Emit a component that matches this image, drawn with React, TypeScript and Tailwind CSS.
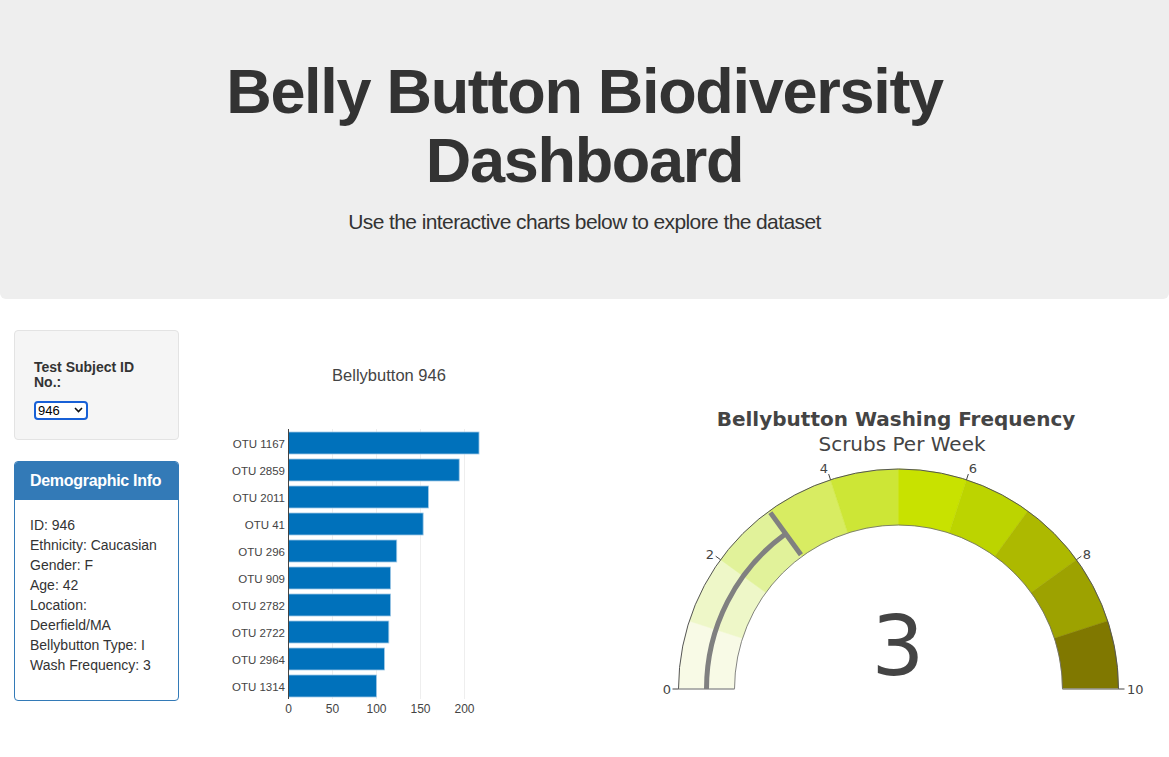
import React from "react";

const bars: [string, number][] = [
  ["OTU 1167", 216.5],
  ["OTU 2859", 194],
  ["OTU 2011", 159],
  ["OTU 41", 153],
  ["OTU 296", 123],
  ["OTU 909", 116],
  ["OTU 2782", 116],
  ["OTU 2722", 114],
  ["OTU 2964", 109],
  ["OTU 1314", 100],
];

const segColors = [
  "#f8fae6",
  "#eef7c8",
  "#e1f29a",
  "#d8ec62",
  "#cde636",
  "#c8e200",
  "#bcd400",
  "#adb900",
  "#9da200",
  "#807800",
];

const CX = 898.5;
const CY = 689;
const RO = 220;
const RI = 164;

function pt(v: number, r: number) {
  const t = Math.PI - (v * Math.PI) / 10;
  return [CX + r * Math.cos(t), CY - r * Math.sin(t)];
}

function segPath(a: number, b: number) {
  const [x1, y1] = pt(a, RO);
  const [x2, y2] = pt(b, RO);
  const [x3, y3] = pt(b, RI);
  const [x4, y4] = pt(a, RI);
  return `M${x1} ${y1} A${RO} ${RO} 0 0 1 ${x2} ${y2} L${x3} ${y3} A${RI} ${RI} 0 0 0 ${x4} ${y4} Z`;
}

function arcPath(a: number, b: number, r: number) {
  const [x1, y1] = pt(a, r);
  const [x2, y2] = pt(b, r);
  return `M${x1} ${y1} A${r} ${r} 0 0 1 ${x2} ${y2}`;
}

function BarChart() {
  const x0 = 288.5;
  const k = 0.88;
  return (
    <svg width={450} height={420} className="block">
      <g transform="translate(-195,-330)" fontFamily="'Liberation Sans', Arial, sans-serif">
        <text x={389} y={381} fontSize={16.5} fill="#444" textAnchor="middle">
          Bellybutton 946
        </text>
        {[50, 100, 150, 200].map((v) => (
          <line key={v} x1={x0 + v * k} x2={x0 + v * k} y1={429} y2={699} stroke="#eeeeee" strokeWidth={1} />
        ))}
        {bars.map(([name, v], i) => {
          const y = 432 + i * 27;
          return (
            <g key={name}>
              <rect x={x0} y={y} width={v * k} height={22} fill="#0071bb" stroke="#9fc8e6" strokeWidth={0.8} />
              <text x={285} y={y + 15.5} fontSize={11.5} fill="#444" textAnchor="end">
                {name}
              </text>
            </g>
          );
        })}
        <line x1={x0} x2={x0} y1={429} y2={699} stroke="#444" strokeWidth={1} />
        {[0, 50, 100, 150, 200].map((v) => (
          <text key={v} x={x0 + v * k} y={713} fontSize={12} fill="#444" textAnchor="middle">
            {v}
          </text>
        ))}
      </g>
    </svg>
  );
}

function Gauge() {
  const ticks: { v: number; x: number; y: number; anchor: "start" | "middle" | "end" }[] = [
    { v: 0, x: 671, y: 694, anchor: "end" },
    { v: 2, x: 710, y: 559, anchor: "middle" },
    { v: 4, x: 824, y: 473, anchor: "middle" },
    { v: 6, x: 973, y: 473, anchor: "middle" },
    { v: 8, x: 1087, y: 559, anchor: "middle" },
    { v: 10, x: 1127, y: 694, anchor: "start" },
  ];
  const [tx1, ty1] = pt(3, 166);
  const [tx2, ty2] = pt(3, 218);
  return (
    <svg width={524} height={420} className="block">
      <g transform="translate(-645,-330)" fontFamily="'DejaVu Sans', Verdana, sans-serif">
        <text x={896} y={426} fontSize={20} fontWeight="bold" fill="#444" textAnchor="middle">
          Bellybutton Washing Frequency
        </text>
        <text x={902} y={451} fontSize={20} fill="#444" textAnchor="middle">
          Scrubs Per Week
        </text>
        {segColors.map((c, i) => (
          <path key={i} d={segPath(i, i + 1)} fill={c} stroke={c} strokeWidth={0.5} />
        ))}
        <path d={arcPath(0, 10, RO)} fill="none" stroke="#555" strokeWidth={1} />
        <path d={arcPath(0, 10, RI)} fill="none" stroke="#666" strokeWidth={0.8} />
        <line x1={CX - RO} x2={CX - RI} y1={CY} y2={CY} stroke="#999" strokeWidth={1.5} />
        <line x1={CX + RI} x2={CX + RO} y1={CY} y2={CY} stroke="#999" strokeWidth={1.5} />
        <path d={arcPath(0, 3, 192)} fill="none" stroke="#808080" strokeWidth={5} />
        <line x1={tx1} y1={ty1} x2={tx2} y2={ty2} stroke="#808080" strokeWidth={5} />
        {ticks.map((t) => {
          const [a, b] = pt(t.v, RO);
          const [c, d] = pt(t.v, RO + 6);
          return (
            <g key={t.v}>
              <line x1={a} y1={b} x2={c} y2={d} stroke="#444" strokeWidth={1} />
              <text x={t.x} y={t.y} fontSize={13} fill="#444" textAnchor={t.anchor}>
                {t.v}
              </text>
            </g>
          );
        })}
        <text x={898} y={675} fontSize={83} fill="#444" textAnchor="middle">
          3
        </text>
      </g>
    </svg>
  );
}

export default function App() {
  return (
    <div className="w-[1169px] min-h-[757px] bg-white text-[#333]" style={{ fontFamily: "'Liberation Sans', Arial, sans-serif" }}>
      <div className="h-[299px] bg-[#eeeeee] rounded-b-[6px] pt-[57px] text-center">
        <h1 className="text-[63px] leading-[1.1] text-[#333] font-bold tracking-[-1.3px]">
          Belly Button Biodiversity
          <br />
          Dashboard
        </h1>
        <p className="mt-[11px] text-[21px] leading-[30px] text-[#333] font-light tracking-[-0.6px]">
          Use the interactive charts below to explore the dataset
        </p>
      </div>
      <div className="flex items-start mt-[31px]">
        <div className="w-[195px] shrink-0 pl-[14px]">
          <div className="w-[165px] bg-[#f5f5f5] border border-[#e3e3e3] rounded-[4px] px-[19px] pt-[29px] pb-[19px]">
            <h5 className="text-[14px] font-bold leading-[1.1] text-[#333]">
              Test Subject ID
              <br />
              No.:
            </h5>
            <div className="mt-[10px] w-[54px] h-[19px] border-2 border-[#1860d6] rounded-[4px] bg-white flex items-center justify-between pl-[2px] pr-[3px]">
              <span className="text-[13px] leading-none text-black">946</span>
              <svg width="9" height="6" viewBox="0 0 9 6">
                <path d="M1 1 L4.5 4.5 L8 1" fill="none" stroke="#111" strokeWidth="1.6" />
              </svg>
            </div>
          </div>
          <div className="w-[165px] mt-[21px] border border-[#337ab7] rounded-[4px] overflow-hidden">
            <div className="bg-[#337ab7] text-white text-[16px] font-bold tracking-[-0.3px] leading-[1.1] px-[15px] pt-[10px] pb-[10px] h-[38px]">
              Demographic Info
            </div>
            <div className="px-[15px] pt-[15px] pb-[25px] text-[14px] leading-[20px] text-[#333]">
              <div>ID: 946</div>
              <div>Ethnicity: Caucasian</div>
              <div>Gender: F</div>
              <div>Age: 42</div>
              <div>Location:</div>
              <div>Deerfield/MA</div>
              <div>Bellybutton Type: I</div>
              <div>Wash Frequency: 3</div>
            </div>
          </div>
        </div>
        <div className="w-[450px] shrink-0">
          <BarChart />
        </div>
        <div className="w-[524px] shrink-0">
          <Gauge />
        </div>
      </div>
    </div>
  );
}
